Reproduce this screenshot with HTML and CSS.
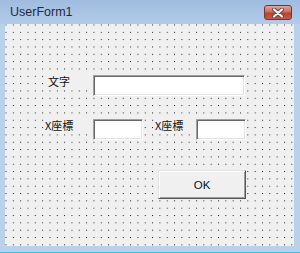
FILE: index.html
```html
<!DOCTYPE html>
<html>
<head>
<meta charset="utf-8">
<title>UserForm1</title>
<link rel="stylesheet" href="styles.css">
</head>
<body>
<div class="window">
  <div class="titlebar">
    <span class="title">UserForm1</span>
    <span class="close">
      <svg width="14" height="10" viewBox="0 0 14 10">
        <path d="M3 1.5 L11 8.5 M11 1.5 L3 8.5" stroke="#5a4a4a" stroke-width="4" stroke-linecap="round"/>
        <path d="M3 1.5 L11 8.5 M11 1.5 L3 8.5" stroke="#f4f4f4" stroke-width="2.2" stroke-linecap="round"/>
      </svg>
    </span>
  </div>
  <div class="client">
    <div class="row row-text">
      <span class="label label-text">文字</span>
      <span class="textbox wide"></span>
    </div>
    <div class="row row-coord">
      <span class="label label-x">X座標</span>
      <span class="textbox small"></span>
      <span class="label label-y">X座標</span>
      <span class="textbox small"></span>
    </div>
    <div class="row row-button">
      <span class="button">OK</span>
    </div>
  </div>
  <div class="frame-bottom"></div>
</div>
</body>
</html>
```

FILE: styles.css
```css
body {
  margin: 0;
  width: 300px;
  height: 253px;
  overflow: hidden;
  font-family: "Noto Sans CJK JP", "Noto Sans", sans-serif;
}

.window {
  width: 300px;
  height: 253px;
  background-color: #b9d1ea;
  display: flex;
  flex-direction: column;
}

.titlebar {
  height: 24px;
  flex: none;
  display: flex;
  align-items: flex-start;
  background: linear-gradient(#9fbcdf, #b3cbe8);
}
.title {
  margin: 5px 0 0 10px;
  font-family: "Liberation Sans", "Noto Sans", sans-serif;
  font-size: 12.5px;
  line-height: 15px;
  color: #1f2b45;
  flex: 1;
}
.close {
  margin: 5px 8px 0 0;
  width: 26px;
  height: 13px;
  border: 1px solid #703636;
  border-radius: 3px;
  background: linear-gradient(#e2a496, #cf6d5e 45%, #bd3f30 55%, #c75a48);
  display: flex;
  align-items: center;
  justify-content: center;
}
.close svg { display: block; }

.client {
  margin: 0 6px 0 5px;
  height: 222px;
  flex: none;
  padding-top: 51px;
  box-sizing: border-box;
  background-color: #f0f0f0;
  background-image: radial-gradient(circle at 0.5px 0.5px, #222 0.6px, transparent 0.9px);
  background-size: 7.33px 7.33px;
  background-position: 0.5px 0.5px;
}

.row {
  display: flex;
  align-items: flex-start;
}
.row-coord { margin-top: 23px; }
.row-button { margin-top: 30px; padding-left: 153px; }

.label {
  font-size: 11px;
  line-height: 13px;
  color: #111;
  background-color: #f0f0f0;
  padding-top: 0;
}
.label-text { margin-left: 43px; width: 45px; }
.label-x { margin-left: 40px; width: 48px; }
.label-y { margin-left: 12px; width: 41px; }

.textbox {
  display: block;
  height: 21px;
  box-sizing: border-box;
  background-color: #fff;
  border: 1px solid;
  border-color: #a0a0a0 #fff #fff #a0a0a0;
  box-shadow: inset 1px 1px #696969, inset -1px -1px #e3e3e3;
}
.wide { width: 152px; }
.small { width: 50px; }

.button {
  display: flex;
  align-items: center;
  justify-content: center;
  width: 88px;
  height: 29px;
  box-sizing: border-box;
  background-color: #f0f0f0;
  border: 1px solid;
  border-color: #e3e3e3 #555 #555 #e3e3e3;
  box-shadow: inset 1px 1px #fff, inset -1px -1px #a0a0a0;
  font-family: "Liberation Sans", sans-serif;
  font-size: 11.5px;
  color: #111;
}

.frame-bottom {
  flex: 1;
  border-bottom: 1px solid #2fc6e6;
}
```
